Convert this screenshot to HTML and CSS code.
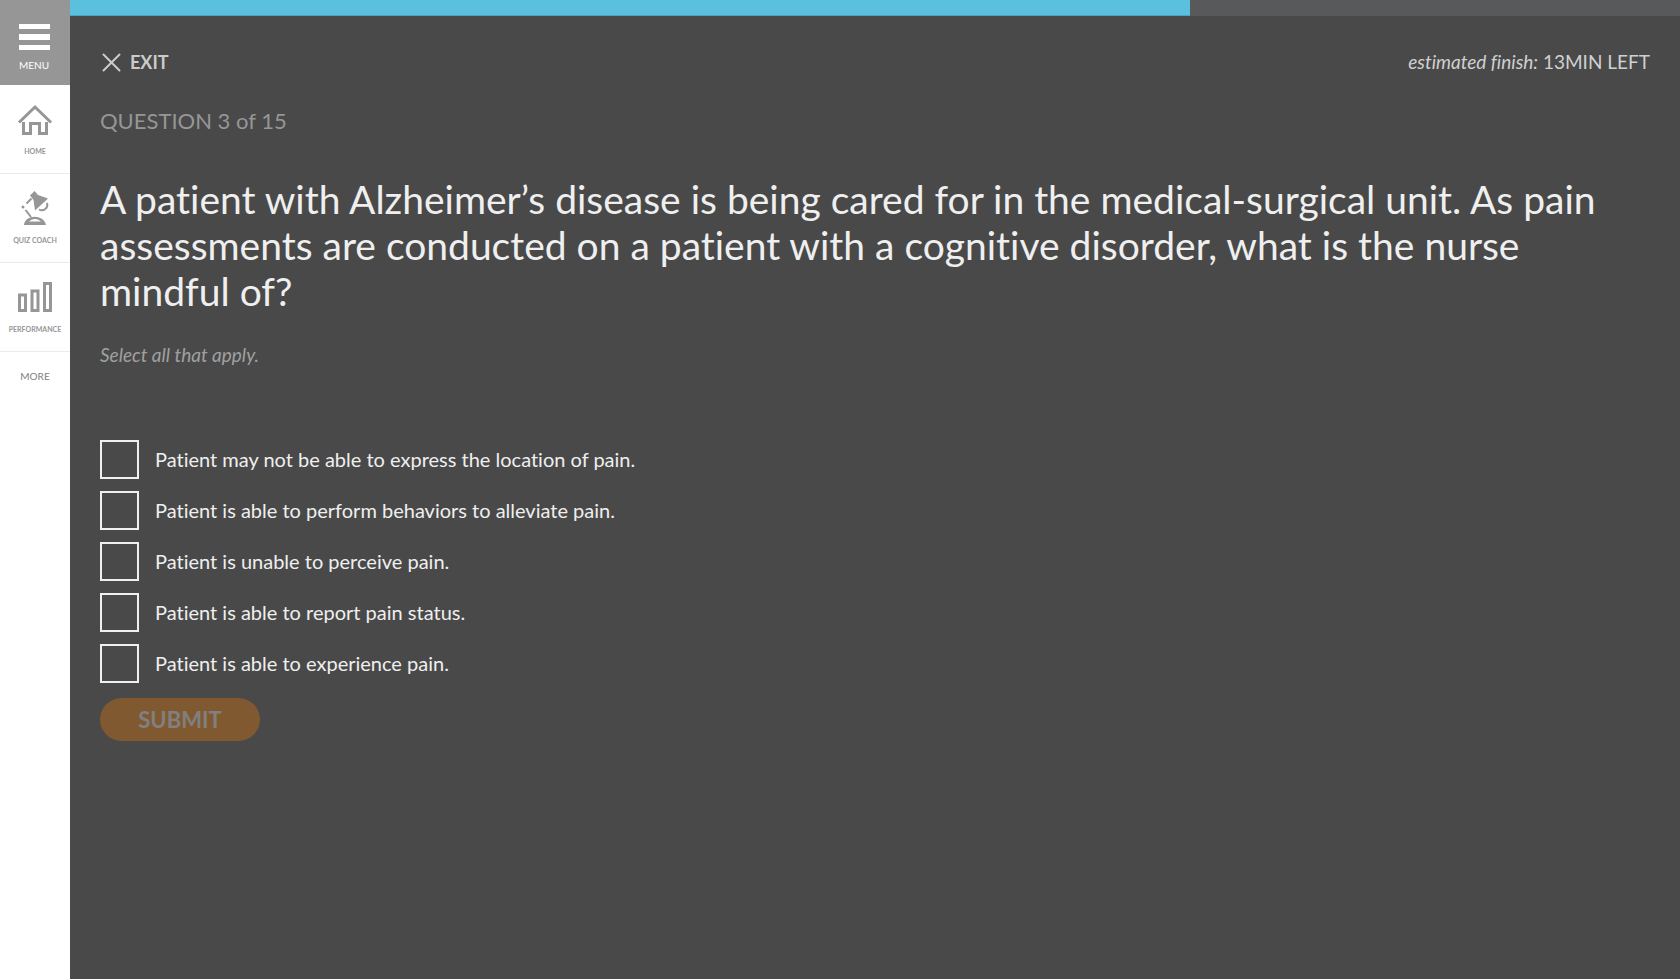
FILE: index.html
```html
<!DOCTYPE html>
<html lang="en">
<head>
<meta charset="utf-8">
<meta name="viewport" content="width=device-width, initial-scale=1">
<title>Quiz Coach</title>
<link rel="stylesheet" href="styles.css">
</head>
<body>
<div class="app">
  <nav class="sidebar" aria-label="Main">
    <button class="menu-button" type="button">
      <svg class="menu-icon" viewBox="0 0 31 27" aria-hidden="true"><path d="M0 0h31v5H0zM0 10h31v6H0zM0 21h31v5H0z"/></svg>
      <span>MENU</span>
    </button>
    <a class="nav-item" href="#home">
      <svg class="nav-icon" viewBox="0 0 36 36" aria-hidden="true">
        <path class="stroke" d="M2 21.500 18 6l16 15.500"/>
        <path class="stroke" d="M6.500 21v11.500h7V22.500h9v10h7V21"/>
      </svg>
      <span>HOME</span>
    </a>
    <a class="nav-item" href="#quiz-coach">
      <svg class="nav-icon" viewBox="0 0 36 36" aria-hidden="true">
        <path class="solid" d="M13 5.500 17.500 1l3.500 4 10 3.500L18 20.500 16.500 10z"/>
        <path class="thin" d="m14.500 8.500-5 5"/>
        <circle class="solid" cx="6" cy="17" r="1.500"/>
        <path class="thin" d="m8.500 20 5.500 7"/>
        <path class="thin" d="M30 13c1.500 5-3.500 9-8 6.500"/>
        <path class="solid" fill-rule="evenodd" d="M7 35c1-11 20-11 22 0zM12 31.500h12c-3-3.500-9-3.500-12 0z"/>
      </svg>
      <span>QUIZ COACH</span>
    </a>
    <a class="nav-item" href="#performance">
      <svg class="nav-icon" viewBox="0 0 36 36" aria-hidden="true">
        <path class="stroke" d="M2.500 16h6v15.500h-6zM15 12h6v19.500h-6zM27.500 4.500h6v27h-6z"/>
      </svg>
      <span>PERFORMANCE</span>
    </a>
    <a class="nav-more" href="#more">MORE</a>
  </nav>
  <div class="quiz">
    <div class="progress" role="progressbar" aria-label="Quiz progress" aria-valuenow="70" aria-valuemin="0" aria-valuemax="100">
      <div class="progress-value" style="width: 69.55%"></div>
    </div>
    <main class="content">
      <header class="topbar">
        <button class="exit" type="button">
          <svg class="exit-icon" viewBox="0 0 19 19" aria-hidden="true"><path d="m1.500 1.500 16 16M17.500 1.500l-16 16"/></svg>
          <span>EXIT</span>
        </button>
        <p class="estimate"><em>estimated finish:</em> 13MIN LEFT</p>
      </header>
      <p class="counter">QUESTION 3 of 15</p>
      <form>
        <h1 class="question">A patient with Alzheimer’s disease is being cared for in the medical-surgical unit. As pain assessments are conducted on a patient with a cognitive disorder, what is the nurse mindful of?</h1>
        <p class="hint">Select all that apply.</p>
        <div class="answers">
          <label class="answer"><input type="checkbox" class="box" name="answer" value="1"><span class="answer-text">Patient may not be able to express the location of pain.</span></label>
          <label class="answer"><input type="checkbox" class="box" name="answer" value="2"><span class="answer-text">Patient is able to perform behaviors to alleviate pain.</span></label>
          <label class="answer"><input type="checkbox" class="box" name="answer" value="3"><span class="answer-text">Patient is unable to perceive pain.</span></label>
          <label class="answer"><input type="checkbox" class="box" name="answer" value="4"><span class="answer-text">Patient is able to report pain status.</span></label>
          <label class="answer"><input type="checkbox" class="box" name="answer" value="5"><span class="answer-text">Patient is able to experience pain.</span></label>
        </div>
        <button class="submit" type="submit" disabled>SUBMIT</button>
      </form>
    </main>
  </div>
</div>
</body>
</html>
```
FILE: styles.css
```css
* { box-sizing: border-box; }
body { margin: 0; font-family: Lato, "Open Sans", sans-serif; font-variant-ligatures: none; background: #494949; color: #efefef; }
button { font: inherit; border: 0; padding: 0; cursor: pointer; }
p, h1 { margin: 0; }

.app { display: flex; min-height: 100vh; }
.sidebar { flex: 0 0 70px; background: #fff; display: flex; flex-direction: column; }
.menu-button { height: 85px; background: #969696; color: #fff; font-size: 10px; line-height: 12px; display: flex; flex-direction: column; align-items: center; gap: 8px; padding: 24px 2px 0 0; }
.menu-icon { width: 31px; height: 27px; fill: #fff; }
.nav-item { height: 89px; padding-top: 16px; border-bottom: 1px solid #ebebeb; display: flex; flex-direction: column; align-items: center; gap: 9px; font-size: 7px; line-height: 10px; font-weight: 700; color: #969696; text-decoration: none; }
.nav-icon { width: 36px; height: 36px; }
.stroke { fill: none; stroke: #969696; stroke-width: 3; }
.thin { fill: none; stroke: #969696; stroke-width: 2; }
.solid { fill: #969696; }
.nav-more { padding-top: 18px; text-align: center; font-size: 10px; line-height: 12px; color: #808080; text-decoration: none; }

.quiz { flex: 1; min-width: 0; }
.progress { height: 16px; background: #58595b; }
.progress-value { height: 100%; background: #5bc0de; border-bottom: 1px solid #4ba3be; }
.content { padding: 32px 30px; }
.topbar { display: flex; justify-content: space-between; align-items: center; height: 28px; }
.exit { display: flex; align-items: center; gap: 9px; padding-left: 2px; background: none; color: #ccc; font-size: 18px; font-weight: 700; line-height: 28px; }
.exit-icon { width: 19px; height: 19px; fill: none; stroke: #ccc; stroke-width: 2; stroke-linecap: round; }
.estimate { font-size: 19px; line-height: 28px; color: #d0d0d0; }
.counter { margin-top: 30px; font-size: 22px; line-height: 30px; color: #969696; }
.question { margin-top: 40px; font-size: 39px; line-height: 46px; font-weight: 400; }
.hint { margin-top: 27px; font-size: 19px; line-height: 28px; font-style: italic; color: #a0a0a0; }
.answers { margin-top: 71px; display: flex; flex-direction: column; align-items: flex-start; gap: 12px; }
.answer { display: flex; align-items: center; gap: 16px; font-size: 20px; line-height: 28px; cursor: pointer; }
.answer-text { padding-bottom: 2px; }
.box { appearance: none; flex: none; width: 39px; height: 39px; margin: 0; border: 2px solid #efefef; }
.box:checked { background: #efefef; box-shadow: inset 0 0 0 6px #494949; }
.submit { margin-top: 15px; width: 160px; height: 43px; border-radius: 22px; background: #815930; color: #808080; font-size: 22px; font-weight: 700; line-height: 43px; }
```
